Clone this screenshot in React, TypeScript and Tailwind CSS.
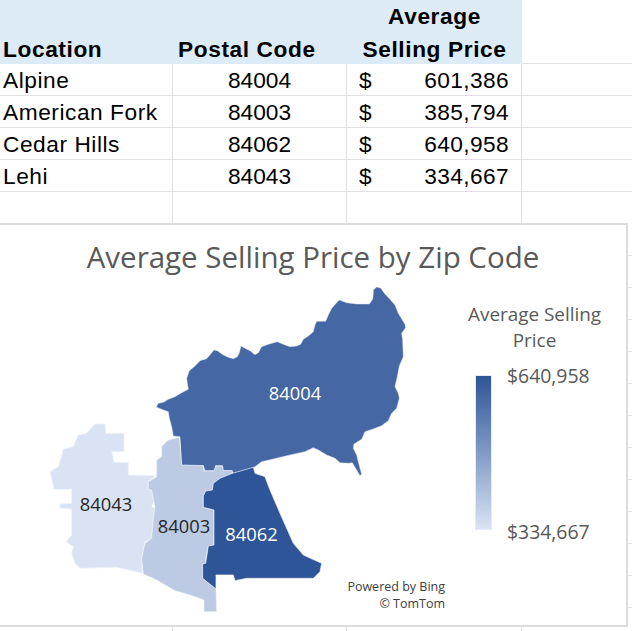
const rows = [
  { name: "Alpine", zip: "84004", price: "601,386" },
  { name: "American Fork", zip: "84003", price: "385,794" },
  { name: "Cedar Hills", zip: "84062", price: "640,958" },
  { name: "Lehi", zip: "84043", price: "334,667" },
];

const upper =
  "M50 378L55 370L70 367L85 358L105 350L125 338L145 328L142 310L140 295L148 272L165 258L180 242L200 236L212 222L222 210L232 212L250 225L265 232L280 236L292 230L298 218L303 198L315 205L330 212L345 224L355 218L365 200L385 193L412 185L430 193L450 200L470 198L482 193L490 178L505 168L520 155L525 135L530 124L557 124L565 105L575 85L590 68L598 60L620 68L650 72L688 72L698 58L700 40L700 30L710 21L722 24L735 42L750 58L765 75L775 100L795 133L797 143L785 160L788 180L790 230L778 258L772 290L765 320L775 340L778 355L770 385L755 400L745 422L725 437L700 447L675 455L665 478L642 492L640 505L650 525L655 545L665 583L660 587L637 548L625 550L600 548L585 535L560 525L535 510L520 503L495 515L450 525L400 537L365 545L345 560L320 572L280 580L275 572L247 572L247 557L227 557L225 572L195 572L190 557L125 557L120 470L100 468L95 440L88 415L85 395L70 390L50 382Z";
const lehi =
  "M165 42L195 42L197 70L252 70L252 125L215 125L222 157L265 157L265 195L348 197L325 215L325 238L335 240L345 265L335 290L345 295L340 325L335 385L315 395L305 445L307 490L230 472L120 475L105 460L95 430L100 410L78 395L95 375L95 297L60 295L60 282L95 280L95 238L42 238L30 185L55 170L70 118L100 110L115 75L140 70Z";
const fork =
  "M418 82L425 165L490 167L492 183L522 183L527 168L548 168L550 182L577 182L575 195L540 205L520 220L517 240L497 243L490 258L490 292L522 300L522 405L505 408L498 440L497 460L488 462L488 505L528 537L530 605L492 605L492 570L450 555L405 542L350 510L310 492L305 445L315 400L335 385L340 325L345 290L335 240L325 238L325 215L350 200L350 150L365 140L365 110L385 90Z";
const cedar =
  "M577 190L640 172L645 190L675 200L690 240L720 310L760 400L790 435L845 460L840 485L820 505L620 505L585 512L580 495L528 495L528 537L488 505L488 462L497 460L505 408L522 405L522 300L490 292L490 258L497 243L517 240L520 220L540 205Z";

function MapChart() {
  return (
    <svg viewBox="0 286 440 340" className="w-[440px] h-[340px] shrink-0">
      <g transform="translate(140 280) scale(0.3333)">
        <path d={upper} fill="#4567a3" stroke="#dfe6f3" strokeWidth="1.5" strokeLinejoin="round" />
      </g>
      <g transform="translate(40 410) scale(0.3333)" stroke="#eef2f9" strokeWidth="2" strokeLinejoin="round">
        <path d={lehi} fill="#dae3f3" />
        <path d={fork} fill="#bccae3" />
        <path d={cedar} fill="#2e5597" />
      </g>
      <g fontSize="18.3" textAnchor="middle">
        <text x="295" y="400" fill="#fff">84004</text>
        <text x="106" y="511" fill="#262626">84043</text>
        <text x="184" y="533" fill="#262626">84003</text>
        <text x="251.5" y="541" fill="#fff">84062</text>
      </g>
    </svg>
  );
}

export default function App() {
  return (
    <div className="relative w-[632px] h-[631px] overflow-hidden bg-white text-black font-['Liberation_Sans',Arial,sans-serif] text-[22.7px]">
      <div className="grid grid-cols-[173px_174px_175px_110px] h-[64px] font-bold tracking-[0.6px]">
        <div className="bg-[#ddebf7] flex items-end pl-[3px] pb-[1px] leading-[28px]">Location</div>
        <div className="bg-[#ddebf7] flex items-end pl-[5px] pb-[1px] leading-[28px]">Postal Code</div>
        <div className="bg-[#ddebf7] flex flex-col items-center gap-[3px] pt-[1px] leading-[30px]">
          <div>Average</div>
          <div>Selling Price</div>
        </div>
        <div className="border-b border-[#e1e1e1]" />
      </div>
      {rows.map((r) => (
        <div key={r.zip} className="grid grid-cols-[173px_174px_175px_110px] h-[32px] leading-[28px]">
          <div className="border-b border-r border-[#e1e1e1] pl-[3px] pt-[2px] tracking-[0.55px]">{r.name}</div>
          <div className="border-b border-r border-[#e1e1e1] pt-[2px] text-center">{r.zip}</div>
          <div className="border-b border-r border-[#e1e1e1] pt-[2px] flex justify-between pl-[12px] pr-[12px]">
            <span>$</span>
            <span className="tracking-[0.4px]">{r.price}</span>
          </div>
          <div className="border-b border-[#e1e1e1]" />
        </div>
      ))}
      <div className="grid grid-cols-[173px_174px_175px_110px] h-[32px]">
        <div className="border-r border-[#e1e1e1]" />
        <div className="border-r border-[#e1e1e1]" />
        <div className="border-r border-[#e1e1e1]" />
        <div />
      </div>

      {/* chart sits on top of the sheet, cut off at the left */}
      <div className="absolute left-0 top-[223px] w-[628px] h-[404px] bg-white border-2 border-l-0 border-[#dcdcdc] font-['Open_Sans',sans-serif] text-[#595959] flex flex-col">
        <div className="h-[61px] shrink-0 text-center text-[29.5px] leading-[64px] whitespace-nowrap">
          Average Selling Price by Zip Code
        </div>
        <div className="relative flex">
          <MapChart />
          <div className="flex flex-col items-start">
            <div className="pl-[28px] text-center text-[18.9px] leading-[26px] mt-[15px]">
              <div className="w-[133px] whitespace-nowrap">Average Selling</div>
              <div className="w-[133px]">Price</div>
            </div>
            <div className="flex ml-[35px] mt-[22px] h-[154px]">
              <div className="w-[17px] h-[155px] bg-gradient-to-b from-[#2e5597] to-[#dae3f3] border border-[#e6ebf5]" />
              <div className="ml-[15px] flex flex-col justify-between text-[19.4px] leading-[24px] -mt-[11px] h-[180px]">
                <div>$640,958</div>
                <div>$334,667</div>
              </div>
            </div>
          </div>
          <div className="absolute left-[300px] top-[292px] w-[145px] text-right text-[12.5px] leading-[17px] text-[#404040]">
            <div>Powered by Bing</div>
            <div>© TomTom</div>
          </div>
        </div>
      </div>

      {/* sheet gridlines showing round the chart */}
      <div className="absolute left-[628px] top-[224px] w-[4px] h-[407px] bg-[repeating-linear-gradient(to_bottom,transparent_0,transparent_31px,#e1e1e1_31px,#e1e1e1_32px)]" />
      <div className="absolute left-[521px] top-[627px] h-[4px] w-px bg-[#e1e1e1]" />
      <div className="absolute left-[346px] top-[627px] h-[4px] w-px bg-[#e1e1e1]" />
      <div className="absolute left-[172px] top-[627px] h-[4px] w-px bg-[#e1e1e1]" />
    </div>
  );
}
